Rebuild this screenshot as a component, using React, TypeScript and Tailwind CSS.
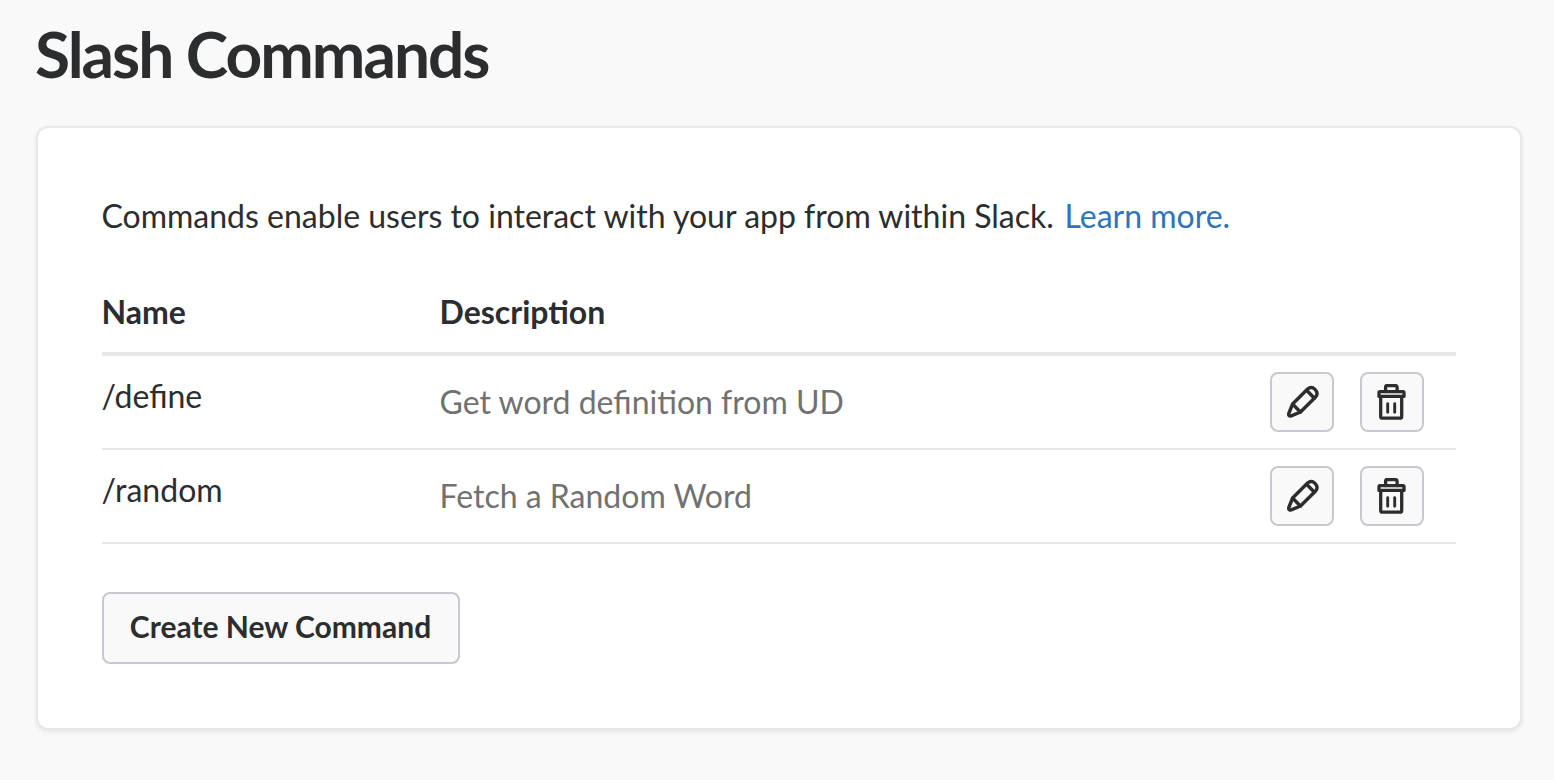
import React from "react";

const commands = [
  { name: "/define", description: "Get word definition from UD" },
  { name: "/random", description: "Fetch a Random Word" },
];

function PencilIcon() {
  return (
    <svg width="36" height="36" viewBox="0 0 36 36" fill="none" stroke="#2c2d2e" strokeWidth="3.4" strokeLinejoin="round" strokeLinecap="round">
      <path d="M8.6 20 L23.6 5 Q27.4 1.8 31 5.4 Q34.8 9.2 31.6 13 L16.5 28 L7.2 31.9 Q4.1 32.6 4.8 29.5 Z" />
      <path d="M22.6 6.2 L30.2 14 M8.8 20.2 L16.4 28" />
    </svg>
  );
}

function TrashIcon() {
  return (
    <svg width="36" height="36" viewBox="0 0 36 36" fill="none" stroke="#2c2d2e" strokeWidth="3.3" strokeLinejoin="round" strokeLinecap="round">
      <path d="M6 7.7 H29 Q30 7.7 30 8.7 V12.4 H5 V8.7 Q5 7.7 6 7.7 Z" />
      <path d="M11.6 7.5 V3.2 Q11.6 1.6 13.2 1.6 H21.5 Q23.1 1.6 23.1 3.2 V7.5" />
      <path d="M6.7 13 V32.4 Q6.7 34.1 8.4 34.1 H26 Q27.7 34.1 27.7 32.4 V13" />
      <path d="M13.7 19.8 V28.2 M20.7 19.8 V28.2" strokeWidth="2.9" />
    </svg>
  );
}

function IconButton({ label, children }: { label: string; children: React.ReactNode }) {
  return (
    <button aria-label={label} className="flex h-[60px] w-16 items-center justify-center rounded-lg border-2 border-[#c9c8ce] bg-[#f9f9f9]">
      {children}
    </button>
  );
}

export default function App() {
  return (
    <main className="flex h-[780px] w-[1554px] flex-col bg-[#f9f9f9] px-9 font-[Lato,sans-serif] text-[32px] text-[#2c2d2e]">
      <h1 className="-ml-px mt-[18px] h-[108px] text-[64px] leading-[72px] font-bold tracking-[-2px]">Slash Commands</h1>
      <section className="flex h-[604px] w-[1486px] flex-col rounded-xl border-2 border-[#e8e8e8] bg-white px-16 pt-16 shadow-[0_2px_4px_rgba(0,0,0,0.08)]">
        <p className="-ml-[0.5px] h-[92px] leading-[48px]">
          Commands enable users to interact with your app from within Slack. <a className="ml-[2.5px] text-[#3074b8]">Learn more.</a>
        </p>
        <div className="flex h-[72px] w-[1354px] border-b-4 border-[#e8e8e8] font-bold leading-[56px]">
          <div className="-ml-[0.5px] w-[338px]">Name</div>
          <div>Description</div>
        </div>
        {commands.map((c) => (
          <div key={c.name} className="flex h-[94px] w-[1354px] border-b-2 border-[#e8e8e8] pt-4">
            <div className="-ml-[0.5px] w-[338px] leading-[48px]">{c.name}</div>
            <div className="flex-1 leading-[60px] text-[#717172]">{c.description}</div>
            <div className="flex gap-[26px] pr-8">
              <IconButton label={`Edit ${c.name}`}><PencilIcon /></IconButton>
              <IconButton label={`Delete ${c.name}`}><TrashIcon /></IconButton>
            </div>
          </div>
        ))}
        <button className="mt-12 h-[72px] w-[358px] rounded-lg border-2 border-[#c9c8ce] bg-[#f9f9f9] pr-px pb-[3px] text-[30px] font-bold">Create New Command</button>
      </section>
    </main>
  );
}
